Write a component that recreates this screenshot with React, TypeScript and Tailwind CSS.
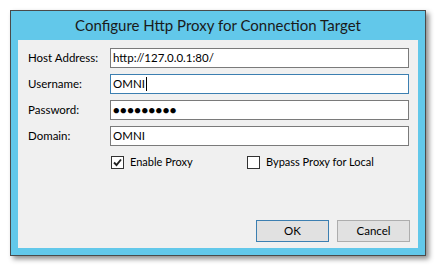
const FONT = "font-['Lato','Open_Sans',sans-serif]";

function Field({ label, value, focused, password }: { label: string; value: string; focused?: boolean; password?: boolean }) {
  return (
    <div className="flex h-[20px] items-center">
      <span className="w-[92px] shrink-0 whitespace-nowrap pl-[10px] text-[11.5px] text-black">{label}</span>
      <div
        className={`flex h-[20px] w-[299px] items-center border bg-white px-[2px] text-[11.5px] text-black ${
          focused ? "border-[#3c7fb1]" : "border-[#7a7a7a]"
        }`}
      >
        {password ? <span className="text-[11px] tracking-[0.5px]">{"●".repeat(9)}</span> : value}
        {focused ? <span className="ml-[1px] h-[14px] w-px bg-black" /> : null}
      </div>
    </div>
  );
}

function Check({ label, checked }: { label: string; checked?: boolean }) {
  return (
    <div className="flex items-center gap-[6px]">
      <div className="flex h-[13px] w-[13px] items-center justify-center border border-[#333] bg-white">
        {checked ? (
          <svg width="9" height="9" viewBox="0 0 9 9">
            <path d="M1 4.5 L3.5 7 L8 1.5" stroke="#222" strokeWidth="1.9" fill="none" />
          </svg>
        ) : null}
      </div>
      <span className="text-[11px] text-black">{label}</span>
    </div>
  );
}

export default function App() {
  return (
    <div className={`h-[267px] w-[437px] bg-white pl-[10px] pt-[10px] ${FONT}`}>
      <div className="flex h-[246px] w-[416px] flex-col border border-[#4a4a4a] bg-[#62c8ea] shadow-[3px_3px_5px_rgba(0,0,0,0.45)]">
        <div className="flex h-[29px] items-center justify-center text-[15px] text-[#1a1a1a]">
          Configure Http Proxy for Connection Target
        </div>
        <div className="mx-[7px] mb-[7px] flex flex-1 flex-col bg-[#f0f0f0] pt-[8px]">
          <div className="flex flex-col gap-[6px]">
            <Field label="Host Address:" value="http://127.0.0.1:80/" />
            <Field label="Username:" value="OMNI" focused />
            <Field label="Password:" value="" password />
            <Field label="Domain:" value="OMNI" />
          </div>
          <div className="mt-[8px] flex pl-[93px]">
            <div className="w-[136px]">
              <Check label="Enable Proxy" checked />
            </div>
            <Check label="Bypass Proxy for Local" />
          </div>
          <div className="mt-auto mb-[6px] flex justify-end gap-[8px] pr-[8px]">
            <button className="h-[22px] w-[73px] border border-[#3c7fb1] bg-[#e1e1e1] text-[11.5px] text-black">OK</button>
            <button className="h-[22px] w-[73px] border border-[#adadad] bg-[#e1e1e1] text-[11.5px] text-black">Cancel</button>
          </div>
        </div>
      </div>
    </div>
  );
}
